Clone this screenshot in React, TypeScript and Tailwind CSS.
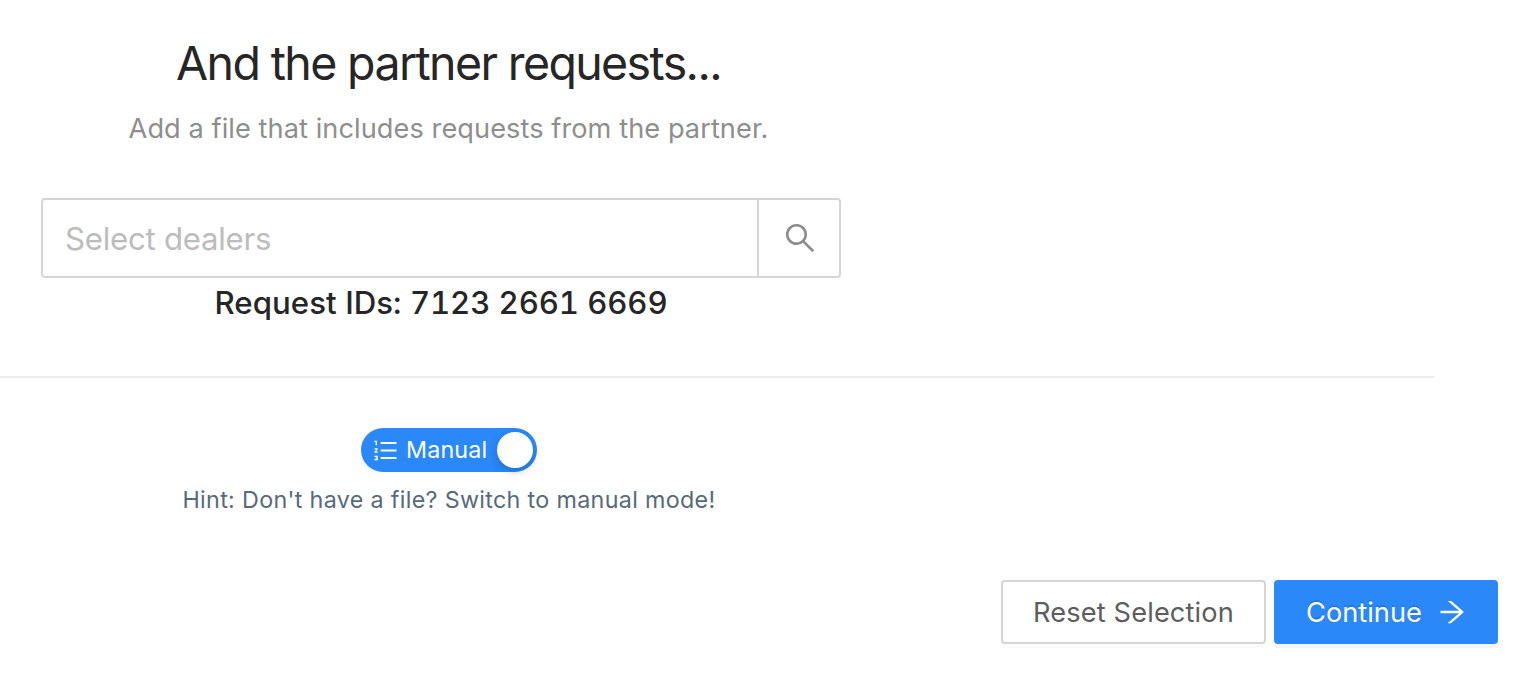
import React from "react";
import { AiOutlineArrowRight, AiOutlineOrderedList, AiOutlineSearch } from "react-icons/ai";

function DealerSearch() {
  return (
    <div className="mt-[49px] ml-[41px] flex h-20 w-[800px] rounded border-2 border-[#d5d5d5]">
      <div className="flex flex-1 items-center pt-[2px] pl-[22px] text-[31.2px] leading-10 tracking-[-0.26px] text-[#bcbcbc]">
        Select dealers
      </div>
      <button className="flex w-[82px] items-center justify-center border-l-2 border-[#d5d5d5] pl-px text-[#8c8c8c]">
        <AiOutlineSearch size={36} />
      </button>
    </div>
  );
}

function ModeSwitch() {
  return (
    <button className="flex h-11 w-44 items-center rounded-full bg-[#2a88f9] pr-1 pl-[11px] text-white">
      <AiOutlineOrderedList size={27} />
      <span className="ml-[7px] flex-1 text-left text-[23.3px] leading-9 tracking-[0.15px]">Manual</span>
      <span className="size-9 rounded-full bg-white shadow-[0_4px_8px_rgba(0,35,11,0.2)]" />
    </button>
  );
}

export default function App() {
  return (
    <main className="h-[674px] overflow-hidden bg-white font-['Inter',sans-serif] text-[#262626]">
      <header className="w-[897px] pt-[35px] text-center">
        <h1 className="text-[46.5px] leading-[56px] tracking-[-1.62px]">And the partner requests...</h1>
        <p className="mt-[18px] text-[27.2px] leading-10 tracking-[0.06px] text-[#8e8e8e]">
          Add a file that includes requests from the partner.
        </p>
      </header>
      <DealerSearch />
      <p className="mt-[5px] ml-[41px] w-[800px] text-center text-[31.2px] leading-10 font-medium tracking-[-0.05px] tabular-nums">
        <span className="tracking-[0.05px]">Request IDs: </span>
        <span className="tracking-[-0.12px]">7123 2661 6669</span>
      </p>
      <hr className="mt-[53px] w-[1434px] border-t-2 border-[#ededed]" />
      <section className="mt-[50px] flex w-[898px] flex-col items-center">
        <ModeSwitch />
        <p className="mt-[10px] text-[23.3px] leading-9 tracking-[0.32px] text-[#586a79]">
          Hint: Don't have a file? Switch to manual mode!
        </p>
      </section>
      <footer className="mt-[62px] flex justify-end gap-2 pr-7 text-[27.2px] leading-10">
        <button className="h-16 w-[265px] rounded border-2 border-[#d5d5d5] pt-[2px] tracking-[0.14px] text-[#5d5d5d] shadow-[0_4px_0_rgba(0,0,0,0.015)]">
          Reset Selection
        </button>
        <button className="flex h-16 w-56 items-center rounded bg-[#2a88f9] pl-8 tracking-[0.02px] text-white shadow-[0_4px_0_rgba(0,0,0,0.045)] [text-shadow:0_-2px_0_rgba(0,0,0,0.12)]">
          <span className="pt-[2px]">Continue</span>
          <AiOutlineArrowRight size={32} className="ml-[14px]" />
        </button>
      </footer>
    </main>
  );
}
